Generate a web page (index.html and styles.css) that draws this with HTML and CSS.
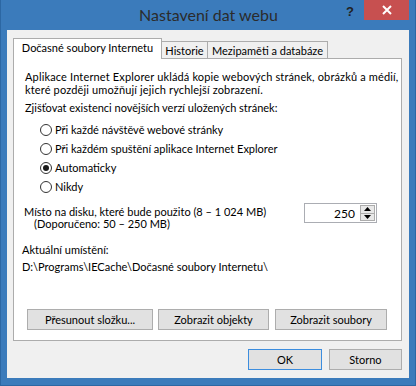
FILE: index.html
```html
<!DOCTYPE html>
<html lang="cs">
  <head>
    <meta charset="UTF-8" />
    <title>Nastavení dat webu</title>
    <link rel="stylesheet" href="styles.css">
  </head>
  <body>
    <div class="window">
      <div class="titlebar">
        <span></span>
        <div class="title">Nastavení dat webu</div>
        <div class="controls">
          <span class="help">?</span>
          <span class="close">
            <svg width="10" height="10" viewBox="0 0 10 10">
              <path d="M1 1 L9 9 M9 1 L1 9" stroke="#fff" stroke-width="2" />
            </svg>
          </span>
        </div>
      </div>

      <div class="client">
        <div class="tabs">
          <div class="tab tab-active">Dočasné soubory Internetu</div>
          <div class="tab tab-history">Historie</div>
          <div class="tab tab-cache">Mezipaměti a databáze</div>
        </div>

        <div class="panel">
          <p class="intro">
            Aplikace Internet Explorer ukládá kopie webových stránek, obrázků a médií,<br>
            které později umožňují jejich rychlejší zobrazení.
          </p>

          <div class="question">Zjišťovat existenci novějších verzí uložených stránek:</div>

          <div class="options">
            <label class="option"><span class="radio"></span>Při každé návštěvě webové stránky</label>
            <label class="option"><span class="radio"></span>Při každém spuštění aplikace Internet Explorer</label>
            <label class="option"><span class="radio checked"></span>Automaticky</label>
            <label class="option"><span class="radio"></span>Nikdy</label>
          </div>

          <div class="disk">
            <div class="disk-text">
              <div>Místo na disku, které bude použito (8 – 1&nbsp;024&nbsp;MB)</div>
              <div class="disk-hint">(Doporučeno: 50 – 250 MB)</div>
            </div>
            <div class="spinner">
              <span class="spinner-value">250</span>
              <span class="spinner-buttons">
                <span class="spin-btn">
                  <svg width="7" height="4" viewBox="0 0 7 4"><path d="M3.5 0 L7 4 L0 4 Z" fill="#000" /></svg>
                </span>
                <span class="spin-btn">
                  <svg width="7" height="4" viewBox="0 0 7 4"><path d="M0 0 L7 0 L3.5 4 Z" fill="#000" /></svg>
                </span>
              </span>
            </div>
          </div>

          <div class="location-label">Aktuální umístění:</div>
          <div class="location">D:\Programs\IECache\Dočasné soubory Internetu\</div>

          <div class="actions">
            <button class="btn btn-move">Přesunout složku...</button>
            <button class="btn btn-objects">Zobrazit objekty</button>
            <button class="btn btn-files">Zobrazit soubory</button>
          </div>
        </div>

        <div class="dialog-buttons">
          <button class="btn btn-ok">OK</button>
          <button class="btn btn-cancel">Storno</button>
        </div>
      </div>
    </div>
  </body>
</html>
```

FILE: styles.css
```css
* {
  margin: 0;
  padding: 0;
  box-sizing: border-box;
}

body {
  width: 416px;
  height: 386px;
  overflow: hidden;
  background: #3b7bbb;
  font-family: Lato, "Noto Sans", sans-serif;
  font-size: 11px;
  color: #000;
}

.window {
  height: 386px;
  display: flex;
  flex-direction: column;
  border: 1px solid #2c67a3;
  border-top: none;
}

/* Title bar */
.titlebar {
  height: 30px;
  display: grid;
  grid-template-columns: 1fr auto 1fr;
}

.title {
  font-size: 16px;
  line-height: 30px;
  color: #2b2b2b;
  padding-left: 1px;
}

.controls {
  justify-self: end;
  display: flex;
  align-items: flex-start;
  margin-right: 6px;
}

.help {
  font-family: "Liberation Sans", sans-serif;
  font-weight: bold;
  font-size: 13px;
  line-height: 24px;
  color: #222;
  margin-right: 10px;
}

.close {
  width: 45px;
  height: 20px;
  background: #c75050;
  display: flex;
  align-items: center;
  justify-content: center;
}

/* Client area */
.client {
  flex: 1;
  margin: 0 6px 7px 6px;
  background: #f0f0f0;
  padding: 8px 7px 0 6px;
  display: flex;
  flex-direction: column;
}

.tabs {
  display: flex;
  align-items: flex-end;
  margin-bottom: -1px;
  position: relative;
  z-index: 1;
}

.tab {
  border: 1px solid #acacac;
  border-bottom: none;
  background: #f0f0f0;
  white-space: nowrap;
  text-align: center;
  height: 17px;
  line-height: 17px;
  margin-bottom: 1px;
}

.tab-active {
  width: 149px;
  height: 21px;
  line-height: 18px;
  margin-bottom: 0;
  background: #fff;
}

.tab-history {
  width: 46px;
  border-left: none;
}

.tab-cache {
  width: 120px;
  border-left: none;
}

.panel {
  height: 283px;
  border: 1px solid #acacac;
  background: #fff;
  padding: 11px 10px 10px 10px;
  display: flex;
  flex-direction: column;
  white-space: nowrap;
}

.intro {
  line-height: 13px;
  margin-left: 1px;
  letter-spacing: 0.15px;
}

.question {
  line-height: 15px;
  margin: 4px 0 0 1px;
}

.options {
  margin-top: 5px;
  display: flex;
  flex-direction: column;
}

.option {
  height: 19px;
  display: flex;
  align-items: center;
  padding-left: 16px;
}

.radio {
  width: 12px;
  height: 12px;
  border: 1px solid #333;
  border-radius: 50%;
  background: #fff;
  margin-right: 3px;
  display: flex;
  align-items: center;
  justify-content: center;
}

.radio.checked::after {
  content: "";
  width: 6px;
  height: 6px;
  border-radius: 50%;
  background: #1a1a1a;
}

.disk {
  margin-top: 10px;
  display: flex;
  align-items: flex-start;
}

.disk-text {
  flex: 1;
  line-height: 12px;
}

.disk-hint {
  padding-left: 10px;
}

.spinner {
  width: 73px;
  height: 20px;
  margin: -3px 14px 0 0;
  border: 1px solid #abadb3;
  display: flex;
  align-items: center;
  justify-content: flex-end;
  padding-right: 1px;
}

.spinner-value {
  margin-right: 5px;
  font-size: 12px;
}

.spinner-buttons {
  display: flex;
  flex-direction: column;
  width: 15px;
  height: 16px;
}

.spin-btn {
  flex: 1;
  background: #e8e8e8;
  border: 1px solid #acacac;
  display: flex;
  align-items: center;
  justify-content: center;
}

.spin-btn + .spin-btn {
  border-top: none;
}

.location-label {
  line-height: 15px;
  margin: 12px 0 0 -2px;
}

.location {
  line-height: 15px;
  margin: 2px 0 0 -2px;
}

.actions {
  margin-top: auto;
  margin-left: 3px;
  display: flex;
}

.btn {
  height: 21px;
  border: 1px solid #adadad;
  background: #e1e1e1;
  font-family: inherit;
  font-size: 11px;
  color: #000;
}

.btn-move {
  width: 126px;
}

.btn-objects {
  width: 111px;
  margin-left: 5px;
}

.btn-files {
  width: 112px;
  margin-left: 6px;
}

.dialog-buttons {
  margin-top: 8px;
  display: flex;
  justify-content: flex-end;
  gap: 7px;
}

.btn-ok {
  width: 74px;
  border-color: #3c8dde;
}

.btn-cancel {
  width: 73px;
}
```
